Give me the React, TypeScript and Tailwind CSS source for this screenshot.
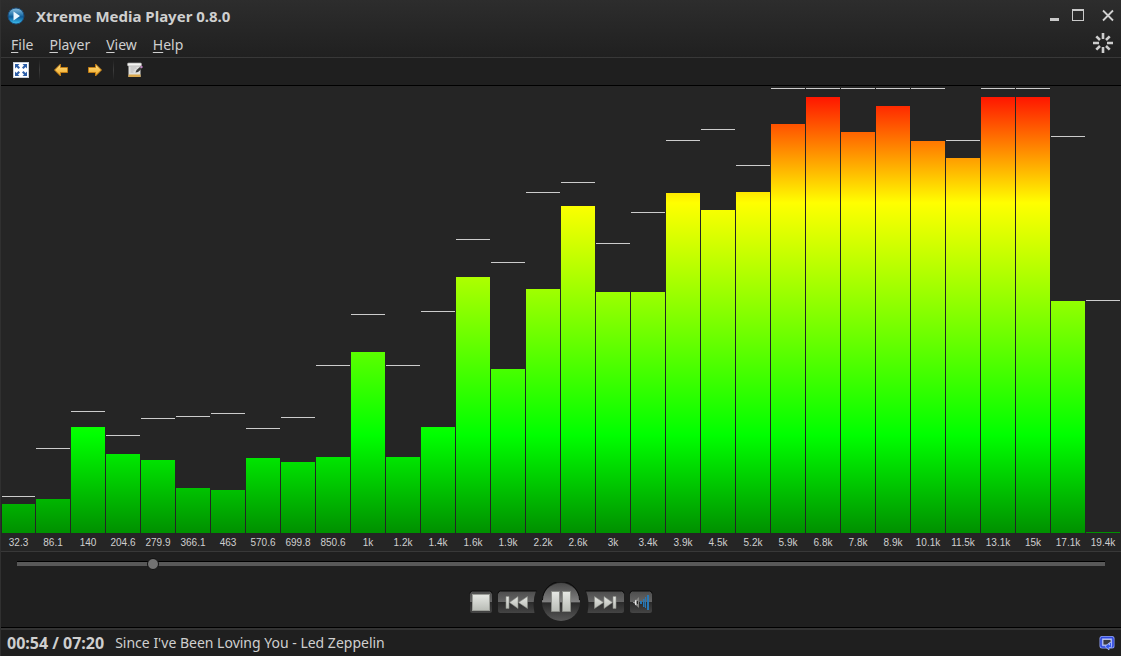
import React from "react";

type Band = { label: string; level: number; peak: number };

const SCALE = 446;

// Levels and peaks are counted up from the base on a scale of 446.
const bands: Band[] = [
  { label: "32.3", level: 29, peak: 37 },
  { label: "86.1", level: 34, peak: 85 },
  { label: "140", level: 106, peak: 122 },
  { label: "204.6", level: 79, peak: 98 },
  { label: "279.9", level: 73, peak: 115 },
  { label: "366.1", level: 45, peak: 117 },
  { label: "463", level: 43, peak: 120 },
  { label: "570.6", level: 75, peak: 105 },
  { label: "699.8", level: 71, peak: 116 },
  { label: "850.6", level: 76, peak: 168 },
  { label: "1k", level: 181, peak: 219 },
  { label: "1.2k", level: 76, peak: 168 },
  { label: "1.4k", level: 106, peak: 222 },
  { label: "1.6k", level: 256, peak: 294 },
  { label: "1.9k", level: 164, peak: 271 },
  { label: "2.2k", level: 244, peak: 341 },
  { label: "2.6k", level: 327, peak: 351 },
  { label: "3k", level: 241, peak: 290 },
  { label: "3.4k", level: 241, peak: 321 },
  { label: "3.9k", level: 340, peak: 393 },
  { label: "4.5k", level: 323, peak: 404 },
  { label: "5.2k", level: 341, peak: 368 },
  { label: "5.9k", level: 409, peak: 445 },
  { label: "6.8k", level: 436, peak: 445 },
  { label: "7.8k", level: 401, peak: 445 },
  { label: "8.9k", level: 427, peak: 445 },
  { label: "10.1k", level: 392, peak: 445 },
  { label: "11.5k", level: 375, peak: 393 },
  { label: "13.1k", level: 436, peak: 445 },
  { label: "15k", level: 436, peak: 445 },
  { label: "17.1k", level: 232, peak: 397 },
  { label: "19.4k", level: 1, peak: 233 },
];

function LogoIcon() {
  return (
    <svg width="18" height="18" viewBox="0 0 18 18" aria-hidden="true">
      <defs>
        <linearGradient id="logo" x1="0" y1="0" x2="0" y2="1">
          <stop offset="0" stopColor="#8cc0e0" />
          <stop offset=".4" stopColor="#2f7db2" />
          <stop offset=".55" stopColor="#0c5a98" />
          <stop offset="1" stopColor="#3fc4f4" />
        </linearGradient>
      </defs>
      <circle cx="9" cy="9" r="8" fill="url(#logo)" stroke="#1c4c78" />
      <path d="M6.500 4.500 13 9l-6.500 4.500z" fill="#e8f6ff" />
    </svg>
  );
}

function FullscreenIcon() {
  return (
    <svg width="16" height="16" viewBox="0 0 16 16" aria-hidden="true">
      <rect x=".5" y=".5" width="15" height="15" fill="#fff" stroke="#c9ced6" />
      <path
        fill="#2c5ea8"
        d="M2 2h4.500L5 3.500 7 5.500 5.500 7l-2-2L2 6.500zM14 2v4.500L12.500 5l-2 2L9 5.500l2-2L9.500 2zM2 14V9.500L3.500 11l2-2L7 10.500l-2 2L6.500 14zM14 14H9.500l1.500-1.500-2-2L10.500 9l2 2L14 9.500z"
      />
    </svg>
  );
}

function ArrowIcon({ flip = false }: { flip?: boolean }) {
  return (
    <svg width="16" height="16" viewBox="0 0 16 16" className={flip ? "-scale-x-100" : ""} aria-hidden="true">
      <defs>
        <linearGradient id={flip ? "arrowR" : "arrowL"} x1="0" y1="0" x2="0" y2="1">
          <stop offset="0" stopColor="#ffe28a" />
          <stop offset="1" stopColor="#f0a41c" />
        </linearGradient>
      </defs>
      <path
        d="M1.500 8 7.500 2v3.500h7v5h-7V14z"
        fill={flip ? "url(#arrowR)" : "url(#arrowL)"}
        stroke="#c07c14"
        strokeLinejoin="round"
      />
    </svg>
  );
}

function EditIcon() {
  return (
    <svg width="18" height="16" viewBox="0 0 18 16" aria-hidden="true">
      <rect x="1.500" y="2" width="12" height="13" fill="#dededc" />
      <rect x=".5" y="1" width="14" height="3" rx="1" fill="#f4f4f2" stroke="#a4a4a4" strokeWidth=".7" />
      <path d="M3.500 6h6M3.500 8h4M3.500 10h3" stroke="#b9b9b9" />
      <path d="M1.500 12.500h12V15h-12z" fill="#d9a84e" />
      <path d="m8.500 10.500 1-2.500 3.500-3 1.500 2-3.500 3z" fill="#3a3a3a" />
      <path d="m13 5 1.500-1.500L16 5l-1.500 1.500z" fill="#bb80bd" />
    </svg>
  );
}

function SpinnerIcon() {
  return (
    <svg width="20" height="20" viewBox="0 0 20 20" aria-hidden="true">
      <g stroke="#cdcdcd" strokeWidth="2.600">
        <path d="M10 0v6M10 14v6M0 10h6M14 10h6" />
        <path d="m3.300 3.300 3.700 3.700M13 13l3.700 3.700M16.700 3.300 13 7M7 13l-3.700 3.700" />
      </g>
    </svg>
  );
}

function ButtonGradients() {
  return (
    <defs>
      <linearGradient id="btn" x1="0" y1="0" x2="0" y2="1">
        <stop offset="0" stopColor="#4c4c4c" />
        <stop offset=".5" stopColor="#666666" />
        <stop offset=".52" stopColor="#2b2b2b" />
        <stop offset="1" stopColor="#454545" />
      </linearGradient>
      <linearGradient id="round" x1="0" y1="0" x2="0" y2="1">
        <stop offset="0" stopColor="#484848" />
        <stop offset=".5" stopColor="#828282" />
        <stop offset=".52" stopColor="#2a2a2a" />
        <stop offset="1" stopColor="#585858" />
      </linearGradient>
      <linearGradient id="face" x1="0" y1="0" x2="0" y2="1">
        <stop offset="0" stopColor="#e6e8e4" />
        <stop offset="1" stopColor="#b9bcb6" />
      </linearGradient>
    </defs>
  );
}

function StopButton() {
  return (
    <button type="button" aria-label="Stop">
      <svg width="24" height="24" viewBox="0 0 24 24" aria-hidden="true">
        <ButtonGradients />
        <rect x="1" y="1" width="22" height="22" rx="2.500" fill="url(#btn)" />
        <path d="M1 3.500Q1 1 3.500 1h17Q23 1 23 3.500" fill="none" stroke="#0a0a0a" />
        <rect x="3.500" y="4.500" width="17" height="16" fill="url(#face)" stroke="#9b9d98" />
      </svg>
    </button>
  );
}

function SkipButton({ next = false }: { next?: boolean }) {
  return (
    <button type="button" aria-label={next ? "Next track" : "Previous track"}>
      <svg width="40" height="24" viewBox="0 0 40 24" className={next ? "-scale-x-100" : ""} aria-hidden="true">
        <path d="M3.500 1H39Q35 11 37.500 23H3.500Q1 23 1 20.500v-17Q1 1 3.500 1z" fill="url(#btn)" />
        <path d="M1 3.500Q1 1 3.500 1H39.500" fill="none" stroke="#0a0a0a" />
        <path
          d="M9 6.500h3v12H9zM21 6.500v12L12.500 12.500zM30.500 6.500v12L21.500 12.500z"
          fill="url(#face)"
          stroke="#8b8d88"
          strokeWidth=".6"
        />
      </svg>
    </button>
  );
}

function PauseButton() {
  return (
    <button type="button" aria-label="Pause">
      <svg width="40" height="40" viewBox="0 0 40 40" aria-hidden="true">
        <circle cx="20" cy="20" r="19" fill="url(#round)" />
        <path d="M1.500 18a18.500 18.500 0 0 1 37 0" fill="none" stroke="#0c0c0c" />
        <path d="M10.500 9.500h8v20h-8zM21.500 9.500h8v20h-8z" fill="url(#face)" stroke="#8b8d88" />
      </svg>
    </button>
  );
}

function VolumeButton() {
  return (
    <button type="button" aria-label="Volume">
      <svg width="24" height="24" viewBox="0 0 24 24" aria-hidden="true">
        <rect x="1" y="1" width="22" height="22" rx="2.500" fill="url(#btn)" />
        <path d="M1 3.500Q1 1 3.500 1h17Q23 1 23 3.500" fill="none" stroke="#0a0a0a" />
        <path d="M6 11 10 7v11l-4-3.500z" fill="#858583" />
        <path d="M7 10Q5.500 12.500 7 15" fill="none" stroke="#e8e8e8" strokeWidth="1.200" />
        <path d="M4 12.500h2" stroke="#b0b0b0" strokeWidth=".8" />
        <path d="M8.500 11v3" stroke="#2a2a2a" />
        <path d="M11 11h2v3h-2zM14 9h1.500v8H14zM16 7h1v11h-1zM18 5h2v15h-2z" fill="#2878b6" />
      </svg>
    </button>
  );
}

function RepeatIcon() {
  return (
    <svg width="16" height="16" viewBox="0 0 16 16" aria-hidden="true">
      <rect x=".5" y="1" width="15" height="12.500" rx="2.500" fill="#8fa0f4" />
      <rect x="2" y="2.500" width="12" height="9.500" rx="1.500" fill="none" stroke="#2f49dc" strokeWidth="1.600" />
      <rect x="4" y="4.500" width="8" height="5.500" fill="#3a3a42" stroke="#c6cdf4" strokeWidth=".8" />
      <path d="M12.500 7.500v5H10V15l-4-3.500L10 8v2h.5V7.500z" fill="#3658ec" stroke="#b9c5ff" strokeWidth=".7" />
    </svg>
  );
}

function MenuItem({ name }: { name: string }) {
  return (
    <button type="button" className="leading-5">
      <span className="underline decoration-1 underline-offset-2">{name[0]}</span>
      {name.slice(1)}
    </button>
  );
}

function Divider() {
  return <div className="h-5 w-px bg-gradient-to-b from-[#202020] via-[#3c3c3c] to-[#202020]" />;
}

export default function App() {
  return (
    <div className="flex min-h-screen flex-col border-l border-[#303030] bg-[#1f1f1f] font-['Noto_Sans',sans-serif] text-[#cfcfcf]">
      <header className="border-b border-[#383838] bg-gradient-to-b from-[#2d2d2d] to-[#202020]">
        <div className="flex h-8 items-center justify-between px-1.5">
          <div className="flex items-center gap-[11px]">
            <LogoIcon />
            <h1 className="text-[15px] leading-8 font-bold">Xtreme Media Player 0.8.0</h1>
          </div>
          <div className="flex items-center gap-2.5">
            <button type="button" aria-label="Minimize">
              <svg width="14" height="14" viewBox="0 0 14 14" aria-hidden="true">
                <path d="M3 9h9v3H3z" fill="#c9c9c9" />
              </svg>
            </button>
            <button type="button" aria-label="Maximize">
              <svg width="14" height="14" viewBox="0 0 14 14" aria-hidden="true">
                <path d="M1 0h12v12H1zM2 2v9h10V2z" fill="#c9c9c9" fillRule="evenodd" />
              </svg>
            </button>
            <button type="button" aria-label="Close" className="pl-1.5">
              <svg width="14" height="14" viewBox="0 0 14 14" aria-hidden="true">
                <path d="m2 1.500 10 10M12 1.500l-10 10" stroke="#d0d0d0" strokeWidth="1.800" />
              </svg>
            </button>
          </div>
        </div>
        <div className="flex h-[25px] items-start justify-between pr-2 pl-2.5">
          <nav className="flex items-center gap-4 pt-[3px] text-sm">
            <MenuItem name="File" />
            <MenuItem name="Player" />
            <MenuItem name="View" />
            <MenuItem name="Help" />
          </nav>
          <div className="pt-px">
            <SpinnerIcon />
          </div>
        </div>
      </header>

      <div className="flex h-7 items-center border-b border-black pb-[3px] pl-3">
        <button type="button" aria-label="Full screen">
          <FullscreenIcon />
        </button>
        <div className="ml-2.5">
          <Divider />
        </div>
        <button type="button" aria-label="Back" className="ml-[13px]">
          <ArrowIcon />
        </button>
        <button type="button" aria-label="Forward" className="ml-[18px]">
          <ArrowIcon flip />
        </button>
        <div className="ml-2.5">
          <Divider />
        </div>
        <button type="button" aria-label="Edit playlist" className="ml-[13px]">
          <EditIcon />
        </button>
      </div>

      <main className="flex grow flex-col border-b border-[#383838] bg-[#252525] pt-px">
        <div className="grid grow [grid-template-columns:repeat(32,minmax(0,1fr))]">
          {bands.map((b) => (
            <div key={b.label} className="flex flex-col pr-px first:pl-px">
              <div className="relative min-h-48 grow">
                <div
                  className="absolute inset-0 bg-[linear-gradient(to_bottom,#ff0000_0%,#ffff00_26%,#00ff00_78%,#009000_100%)]"
                  style={{ clipPath: `inset(${100 - (b.level / SCALE) * 100}% 0 0 0)` }}
                />
                <div
                  className="absolute inset-x-0 h-px bg-[#cccccc]"
                  style={{ bottom: `${((b.peak - 1) / SCALE) * 100}%` }}
                />
              </div>
              <div className="h-[18px] text-center font-['Liberation_Sans',sans-serif] text-[10px] leading-5 whitespace-nowrap">
                {b.label}
              </div>
            </div>
          ))}
        </div>
      </main>

      <div className="flex h-[22px] items-center px-4">
        <input
          type="range"
          aria-label="Position"
          min={0}
          max={440}
          defaultValue={53}
          className="h-4 w-full appearance-none bg-transparent [&::-webkit-slider-runnable-track]:h-[5px] [&::-webkit-slider-runnable-track]:border-t [&::-webkit-slider-runnable-track]:border-black [&::-webkit-slider-runnable-track]:bg-[#585858] [&::-webkit-slider-thumb]:-mt-1 [&::-webkit-slider-thumb]:size-3 [&::-webkit-slider-thumb]:appearance-none [&::-webkit-slider-thumb]:rounded-full [&::-webkit-slider-thumb]:border [&::-webkit-slider-thumb]:border-[#111111] [&::-webkit-slider-thumb]:bg-[#727272]"
        />
      </div>

      <div className="flex h-[53px] items-center justify-center gap-1 pt-0.5">
        <StopButton />
        <SkipButton />
        <PauseButton />
        <SkipButton next />
        <VolumeButton />
      </div>

      <footer className="border-t border-black">
        <div className="flex h-7 items-center border-t-2 border-[#333333] px-1.5 text-sm">
          <span className="text-base leading-6 font-bold">00:54 / 07:20</span>
          <span className="ml-[11px] grow leading-6">Since I've Been Loving You - Led Zeppelin</span>
          <button type="button" aria-label="Repeat">
            <RepeatIcon />
          </button>
        </div>
      </footer>
    </div>
  );
}
